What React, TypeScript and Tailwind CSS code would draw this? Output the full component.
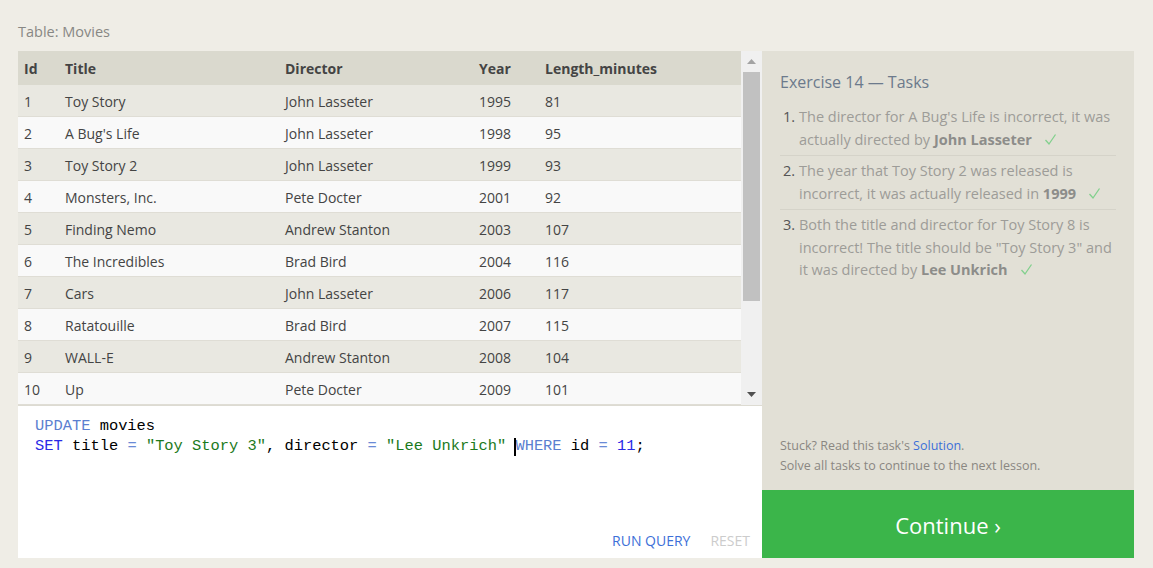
import React from "react";

// ── Données de la table Movies ─────────────
const movies = [
  { id: 1, title: "Toy Story", director: "John Lasseter", year: 1995, length: 81 },
  { id: 2, title: "A Bug's Life", director: "John Lasseter", year: 1998, length: 95 },
  { id: 3, title: "Toy Story 2", director: "John Lasseter", year: 1999, length: 93 },
  { id: 4, title: "Monsters, Inc.", director: "Pete Docter", year: 2001, length: 92 },
  { id: 5, title: "Finding Nemo", director: "Andrew Stanton", year: 2003, length: 107 },
  { id: 6, title: "The Incredibles", director: "Brad Bird", year: 2004, length: 116 },
  { id: 7, title: "Cars", director: "John Lasseter", year: 2006, length: 117 },
  { id: 8, title: "Ratatouille", director: "Brad Bird", year: 2007, length: 115 },
  { id: 9, title: "WALL-E", director: "Andrew Stanton", year: 2008, length: 104 },
  { id: 10, title: "Up", director: "Pete Docter", year: 2009, length: 101 },
];

const font = { fontFamily: "'Open Sans', 'Noto Sans', sans-serif" };

// Coche fine verte après chaque tâche résolue
function Check() {
  return (
    <svg className="ml-[12px] inline-block align-[-1px]" width="13" height="13" viewBox="0 0 13 13">
      <path d="M1.5 7 L5 11 L11.5 1.5" fill="none" stroke="#82d08d" strokeWidth="1.3" />
    </svg>
  );
}

// ── Table + barre de défilement ─────────────
function MoviesTable() {
  return (
    <div className="flex h-[355px] border-b border-[#dddbd2]">
      <div className="w-[723px] shrink-0 text-[14px] text-[#444]">
        <div className="flex h-[34px] items-center bg-[#dad9ce] font-bold text-[#444]">
          <div className="w-[47px] pl-[6px]">Id</div>
          <div className="w-[220px]">Title</div>
          <div className="w-[194px]">Director</div>
          <div className="w-[66px]">Year</div>
          <div>Length_minutes</div>
        </div>
        {movies.map((m, i) => (
          <div
            key={m.id}
            className={`flex h-[32px] items-center border-b border-[#dfddd5] pt-[2px] ${
              i % 2 === 0 ? "bg-[#e9e8e1]" : "bg-[#f9f9f9]"
            }`}
          >
            <div className="w-[47px] pl-[6px]">{m.id}</div>
            <div className="w-[220px]">{m.title}</div>
            <div className="w-[194px]">{m.director}</div>
            <div className="w-[66px]">{m.year}</div>
            <div>{m.length}</div>
          </div>
        ))}
      </div>
      <div className="flex w-[21px] shrink-0 flex-col items-center bg-[#f0f0f0]">
        <div className="flex h-[21px] items-center justify-center">
          <svg width="9" height="5" viewBox="0 0 9 5">
            <path d="M0 5 L4.5 0 L9 5 Z" fill="#a3a3a3" />
          </svg>
        </div>
        <div className="h-[229px] w-[17px] bg-[#c1c1c1]" />
        <div className="flex-1" />
        <div className="flex h-[21px] items-center justify-center">
          <svg width="9" height="5" viewBox="0 0 9 5">
            <path d="M0 0 L9 0 L4.5 5 Z" fill="#505050" />
          </svg>
        </div>
      </div>
    </div>
  );
}

// ── Éditeur SQL ────────────────────────────
function Editor() {
  return (
    <div className="flex flex-1 flex-col bg-white">
      <div
        className="flex-1 pl-[17px] pt-[10px] text-[15.4px] leading-[20px] text-black"
        style={{ fontFamily: "'Liberation Mono', monospace" }}
      >
        <div className="whitespace-pre">
          <span className="text-[#5b7fd0]">UPDATE</span> movies
        </div>
        <div className="whitespace-pre">
          <span className="text-[#2a2ae6]">SET</span> title{" "}
          <span className="text-[#6a8ad6]">=</span>{" "}
          <span className="text-[#1c7a1c]">"Toy Story 3"</span>, director{" "}
          <span className="text-[#6a8ad6]">=</span>{" "}
          <span className="text-[#1c7a1c]">"Lee Unkrich"</span>{" "}
          <span className="relative text-[#5b7fd0]">
            <span className="absolute left-[-1px] top-[1px] h-[18px] w-[2px] bg-black" />
            WHERE
          </span>{" "}
          id <span className="text-[#6a8ad6]">=</span>{" "}
          <span className="text-[#2a2ae6]">11</span>;
        </div>
      </div>
      <div className="flex h-[36px] items-center justify-end gap-[20px] pr-[12px] text-[14px]" style={font}>
        <span className="text-[#3d6fd8]">RUN QUERY</span>
        <span className="text-[#cccccc]">RESET</span>
      </div>
    </div>
  );
}

// ── Panneau des tâches ─────────────────────
function TasksPanel() {
  return (
    <div className="flex w-[372px] shrink-0 flex-col bg-[#e2e0d6]">
      <div className="flex flex-1 flex-col px-[18px] pt-[19px]">
        <h2 className="text-[16px] text-[#6c7a8c]">Exercise 14 — Tasks</h2>
        <ol className="mt-[12px] text-[14.5px] leading-[22.5px] text-[#9d9c98]">
          <li className="flex border-b border-[#d5d3c9] pb-[4px]">
            <span className="w-[19px] shrink-0 pl-[3px] text-[#555]">1.</span>
            <span>
              The director for A Bug's Life is incorrect, it was actually directed by{" "}
              <b className="text-[#8d8d8a]">John Lasseter</b>
              <Check />
            </span>
          </li>
          <li className="flex border-b border-[#d5d3c9] py-[4px]">
            <span className="w-[19px] shrink-0 pl-[3px] text-[#555]">2.</span>
            <span>
              The year that Toy Story 2 was released is incorrect, it was actually released in{" "}
              <b className="text-[#8d8d8a]">1999</b>
              <Check />
            </span>
          </li>
          <li className="flex pt-[4px]">
            <span className="w-[19px] shrink-0 pl-[3px] text-[#555]">3.</span>
            <span>
              Both the title and director for Toy Story 8 is incorrect! The title should be "Toy Story 3" and it
              was directed by <b className="text-[#8d8d8a]">Lee Unkrich</b>
              <Check />
            </span>
          </li>
        </ol>
        <div className="flex-1" />
        <div className="pb-[14px] text-[12.5px] leading-[20px] text-[#8a8782]">
          <p>
            Stuck? Read this task's <span className="text-[#3d6fd8]">Solution</span>.
          </p>
          <p>Solve all tasks to continue to the next lesson.</p>
        </div>
      </div>
      <div className="flex h-[68px] items-center justify-center bg-[#3bb54a] pt-[2px] text-[22px] text-white">
        Continue ›
      </div>
    </div>
  );
}

export default function App() {
  return (
    <div className="h-[568px] w-full overflow-hidden bg-[#efede6] pl-[18px] pt-[20px]" style={font}>
      <p className="h-[31px] pt-[1px] text-[14.5px] leading-[22px] text-[#888784]">Table: Movies</p>
      <div className="flex h-[507px]">
        <div className="flex w-[744px] shrink-0 flex-col">
          <MoviesTable />
          <Editor />
        </div>
        <TasksPanel />
      </div>
    </div>
  );
}
